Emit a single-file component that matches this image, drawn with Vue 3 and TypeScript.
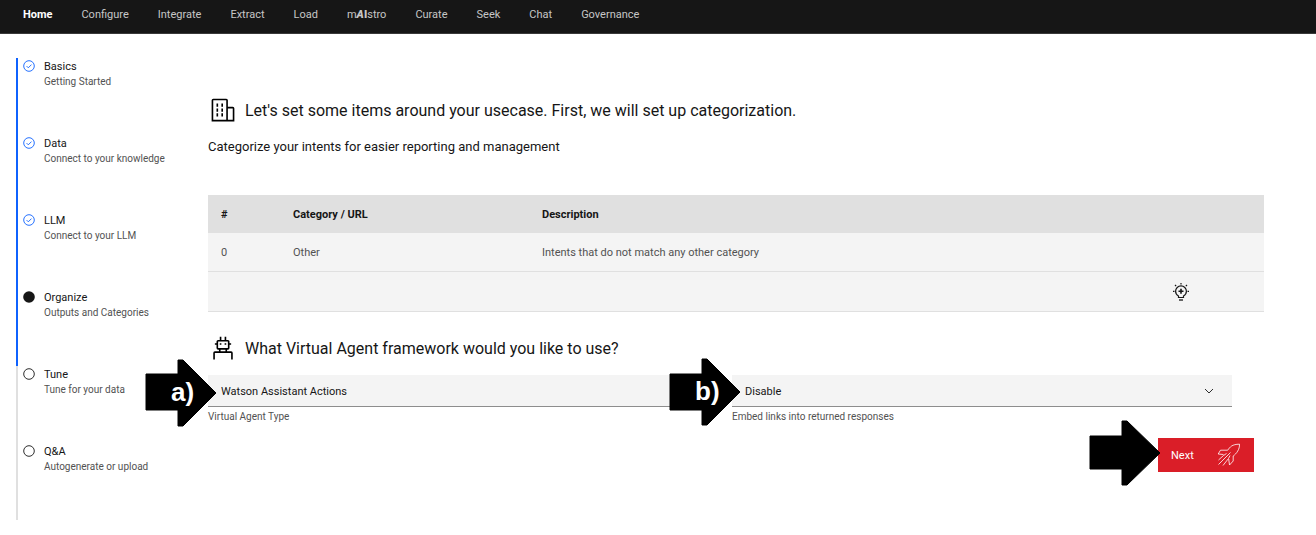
<script setup lang="ts">
import { ref } from 'vue'

type StepState = 'complete' | 'current' | 'incomplete'
interface Step { label: string; hint: string; state: StepState }

const navItems: string[] = ['Home', 'Configure', 'Integrate', 'Extract', 'Load', 'mAIstro', 'Curate', 'Seek', 'Chat', 'Governance']

const steps: Step[] = [
  { label: 'Basics', hint: 'Getting Started', state: 'complete' },
  { label: 'Data', hint: 'Connect to your knowledge', state: 'complete' },
  { label: 'LLM', hint: 'Connect to your LLM', state: 'complete' },
  { label: 'Organize', hint: 'Outputs and Categories', state: 'current' },
  { label: 'Tune', hint: 'Tune for your data', state: 'incomplete' },
  { label: 'Q&A', hint: 'Autogenerate or upload', state: 'incomplete' },
]

const categories = [
  { id: 0, name: 'Other', description: 'Intents that do not match any other category' },
]

const agentType = ref('Watson Assistant Actions')
const embedLinks = ref('Disable')
</script>

<template>
  <div class="page">
    <header class="topbar">
      <nav class="nav" aria-label="Main">
        <a v-for="item in navItems" :key="item" href="#" :class="{ active: item === 'Home' }">
          <template v-if="item === 'mAIstro'">m<b class="ai"><i>A</i>I</b>stro</template>
          <template v-else>{{ item }}</template>
        </a>
      </nav>
    </header>

    <div class="layout">
      <ol class="steps">
        <li v-for="step in steps" :key="step.label" :class="['step', step.state]">
          <svg class="step-icon" viewBox="0 0 12 12" aria-hidden="true">
            <circle v-if="step.state === 'current'" cx="6" cy="6" r="5.8" fill="#161616" />
            <circle v-else cx="6" cy="6" r="5.3" fill="none" stroke="currentColor" stroke-width=".9" />
            <path v-if="step.state === 'complete'" d="M3.6 6.1 5.3 7.8 8.5 4.6" fill="none" stroke="currentColor" stroke-width=".9" />
          </svg>
          <div>
            <p class="step-label">{{ step.label }}</p>
            <p class="step-hint">{{ step.hint }}</p>
          </div>
        </li>
      </ol>

      <main class="content">
        <h1 class="title">
          <svg class="title-icon" viewBox="0 0 32 32" aria-hidden="true">
            <path d="M8 8h2v4H8zM8 14h2v4H8zM14 8h2v4h-2zM14 14h2v4h-2zM8 20h2v4H8zM14 20h2v4h-2z" />
            <path d="M30 14a2 2 0 0 0-2-2h-6V4a2 2 0 0 0-2-2H4a2 2 0 0 0-2 2v26h28ZM4 4h16v24H4Zm18 24V14h6v14Z" />
          </svg>
          Let's set some items around your usecase. First, we will set up categorization.
        </h1>
        <p class="lead">Categorize your intents for easier reporting and management</p>

        <table class="categories">
          <thead>
            <tr>
              <th class="col-id" scope="col">#</th>
              <th class="col-name" scope="col">Category / URL</th>
              <th scope="col">Description</th>
              <th class="col-action"></th>
            </tr>
          </thead>
          <tbody>
            <tr v-for="category in categories" :key="category.id">
              <td>{{ category.id }}</td>
              <td>{{ category.name }}</td>
              <td>{{ category.description }}</td>
              <td></td>
            </tr>
            <tr class="add-row">
              <td></td>
              <td></td>
              <td></td>
              <td>
                <button type="button" class="idea" aria-label="Add category">
                  <svg viewBox="0 0 18 20" fill="none" stroke="#161616" aria-hidden="true">
                    <path d="M6.500 15.500v-1.500C4.600 13 3.600 11.400 3.600 9.300a5.400 5.400 0 0 1 10.800 0c0 2.100-1 3.700-2.900 4.700v1.500Z" stroke-width="1.200" />
                    <path d="M6.500 9.300h5M9 6.800v5" stroke-width="1.600" />
                    <path d="M7 18h4" stroke-width="1.300" />
                    <path d="M9 1v1.500M1 9.300h1.500M15.500 9.300H17M3 3l1.200 1.200M15 3l-1.200 1.200" stroke-width="1.200" />
                  </svg>
                </button>
              </td>
            </tr>
          </tbody>
        </table>

        <h2 class="title framework">
          <svg class="title-icon" viewBox="0 0 32 32" aria-hidden="true">
            <path d="M18 10h2v2h-2zM12 10h2v2h-2z" />
            <path d="M26 20h-5v-2h1a2 2 0 0 0 2-2v-4h2v-2h-2V8a2 2 0 0 0-2-2h-2V2h-2v4h-4V2h-2v4h-2a2 2 0 0 0-2 2v2H6v2h2v4a2 2 0 0 0 2 2h1v2H6a2 2 0 0 0-2 2v8h2v-8h20v8h2v-8a2 2 0 0 0-2-2ZM10 8h12v8H10Zm3 10h6v2h-6Z" />
          </svg>
          What Virtual Agent framework would you like to use?
        </h2>

        <div class="fields">
          <div class="field">
            <div class="select-wrap">
              <select id="agent-type" v-model="agentType">
                <option>Watson Assistant Actions</option>
              </select>
            </div>
            <label for="agent-type">Virtual Agent Type</label>
            <div class="pointer pointer-a">
              <svg viewBox="0 0 72 68" aria-hidden="true"><path d="M1 15h32V1h5l33 33-33 33h-5V51H1Z" stroke="#000" stroke-linejoin="round" /></svg>
              <span>a)</span>
            </div>
          </div>
          <div class="field">
            <div class="select-wrap">
              <select id="embed-links" v-model="embedLinks">
                <option>Disable</option>
                <option>Enable</option>
              </select>
              <svg class="chevron" viewBox="0 0 10 10" aria-hidden="true"><path d="m1 3 4 4 4-4" fill="none" stroke="#161616" stroke-width=".9" /></svg>
            </div>
            <label for="embed-links">Embed links into returned responses</label>
            <div class="pointer pointer-b">
              <svg viewBox="0 0 72 68" aria-hidden="true"><path d="M1 16h32V1h5l33 33-33 33h-5V52H1Z" stroke="#000" stroke-linejoin="round" /></svg>
              <span>b)</span>
            </div>
          </div>
        </div>

        <div class="actions">
          <div class="next-wrap">
            <button type="button" class="next">
              <span>Next</span>
              <svg viewBox="0 0 24 24" fill="none" stroke="#fff" stroke-width=".8" stroke-linejoin="round" aria-hidden="true">
                <path d="M6.500 11.500 1.200 11 3.500 7.200h7.200C13 4 15 1.200 22.500 1.200c.3 5-3 9.500-6.300 11.800V18l-3.700 4-.8-6" />
                <path d="M13.500 9.500 1.500 21.500M6.500 12.500l-5 4.500M11.500 15.500 6 22.500M9.500 10.500l-3 2M13 12.500l-1.500 3" />
              </svg>
            </button>
            <div class="pointer pointer-next">
              <svg viewBox="0 0 72 66" aria-hidden="true"><path d="M1 16h32V1h5l33 32-33 32h-5V49H1Z" stroke="#000" stroke-linejoin="round" /></svg>
            </div>
          </div>
        </div>
      </main>
    </div>
  </div>
</template>

<style>
body { margin: 0; background: #fff; }
</style>

<style scoped>
.page { font-family: Roboto, "Liberation Sans", sans-serif; font-size: 11px; line-height: 16px; color: #161616; }
p, h1, h2, ol { margin: 0; padding: 0; }
.topbar { height: 33px; background: #161616; border-bottom: 1px solid #393939; }
.nav { display: flex; gap: 29px; padding: 7px 23px; }
.nav a { color: #c6c6c6; text-decoration: none; }
.nav a.active { color: #fff; font-weight: 700; }
.ai { font-weight: 900; }
.layout { display: grid; grid-template-columns: 192px 1fr; padding: 24px 52px 0 16px; }
.steps { list-style: none; }
.step { display: flex; gap: 9px; box-sizing: border-box; height: 77px; padding: 2px 0 0 5px; border-left: 2px solid #0f62fe; }
.step.incomplete { border-left-color: #e0e0e0; }
.step-icon { width: 12px; height: 12px; color: #0f62fe; }
.incomplete .step-icon { color: #161616; }
.step-label { line-height: 14px; }
.step-hint { font-size: 10px; color: #525252; }
.content { padding-top: 39px; }
.title { display: flex; align-items: center; gap: 9px; padding-left: 2px; font-size: 16px; line-height: 28px; font-weight: 400; }
.title-icon { width: 26px; height: 26px; }
.content .title-icon { margin-bottom: 2px; }
.lead { margin-top: 14px; font-size: 13px; }
.categories { width: 100%; margin-top: 40px; border-spacing: 0; table-layout: fixed; text-align: left; }
th, td { box-sizing: border-box; height: 38px; padding: 2px 13px 0; }
th { background: #e0e0e0; font-weight: 700; }
td { height: 39px; background: #f4f4f4; color: #525252; border-bottom: 1px solid #e0e0e0; }
.add-row td { height: 40px; padding-top: 0; }
.col-id { width: 72px; }
.col-name { width: 249px; }
.col-action { width: 105px; }
.idea { display: block; width: 18px; height: 20px; padding: 0; border: 0; background: none; }
.idea svg { display: block; width: 18px; height: 20px; }
.framework { margin-top: 23px; }
.fields { display: grid; grid-template-columns: 1fr 500px; gap: 24px; margin: 12px 32px 0 0; }
.field { position: relative; }
.select-wrap { position: relative; }
select { display: block; appearance: none; box-sizing: border-box; width: 100%; height: 32px; padding: 2px 13px 0; border: 0; border-bottom: 1px solid #8d8d8d; border-radius: 0; background: #f4f4f4; color: #161616; font: inherit; }
.chevron { position: absolute; right: 18px; top: 11px; width: 10px; height: 10px; pointer-events: none; }
label { display: block; margin-top: 2px; font-size: 10px; color: #525252; }
.pointer { position: absolute; width: 72px; pointer-events: none; }
.pointer svg { display: block; width: 100%; }
.pointer span { position: absolute; left: 26px; top: 20px; color: #fff; font: bold 26px/26px "Liberation Sans", sans-serif; }
.pointer-a, .pointer-b { left: -63px; top: -16px; }
.pointer-b { top: -17px; }
.pointer-next { right: 93px; top: -18px; }
.actions { display: flex; justify-content: flex-end; margin: 13px 10px 0 0; }
.next-wrap { position: relative; }
.next { display: flex; align-items: center; justify-content: space-between; width: 96px; height: 34px; padding: 0 13px; border: 0; background: #da1e28; color: #fff; font: inherit; }
.next span { padding-top: 2px; }
.next svg { width: 24px; height: 24px; }
</style>
